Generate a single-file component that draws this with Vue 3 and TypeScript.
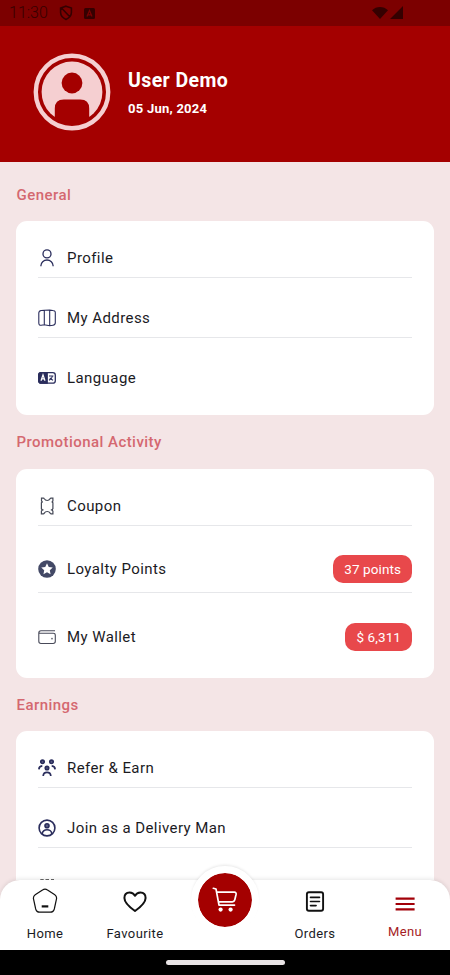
<script setup lang="ts">
type Icon = 'profile' | 'map' | 'language' | 'coupon' | 'star' | 'wallet' | 'refer' | 'delivery' | 'store'
interface Row { icon: Icon; label: string; badge?: string; tall?: boolean }
interface Section { title: string; rows: Row[] }

const sections: Section[] = [
  {
    title: 'General',
    rows: [
      { icon: 'profile', label: 'Profile' },
      { icon: 'map', label: 'My Address' },
      { icon: 'language', label: 'Language' },
    ],
  },
  {
    title: 'Promotional Activity',
    rows: [
      { icon: 'coupon', label: 'Coupon' },
      { icon: 'star', label: 'Loyalty Points', badge: '37 points', tall: true },
      { icon: 'wallet', label: 'My Wallet', badge: '$ 6,311', tall: true },
    ],
  },
  {
    title: 'Earnings',
    rows: [
      { icon: 'refer', label: 'Refer & Earn' },
      { icon: 'delivery', label: 'Join as a Delivery Man' },
      { icon: 'store', label: '' },
    ],
  },
]
</script>

<template>
  <div class="screen">
    <div class="status">
      <span class="clock">11:30</span>
      <svg class="st-shield" width="14" height="16" viewBox="0 0 14 16" fill="none" stroke="currentColor" stroke-width="1.6">
        <path d="M7 1.2 12.4 3v4.6c0 3.2-2.2 5.4-5.4 6.8-3.2-1.4-5.4-3.6-5.4-6.8V3zM2.5 3l8.5 9" />
      </svg>
      <svg class="st-app" width="11" height="11" viewBox="0 0 11 11">
        <rect width="11" height="11" rx="1.5" fill="currentColor" />
        <path d="M3 8.6 5.5 2.6 8 8.6M4 6.8h3" fill="none" stroke="#7c0000" stroke-width="1.2" />
      </svg>
      <svg class="st-net" width="32" height="14" viewBox="0 0 32 14" fill="currentColor">
        <path d="M0 4.3C4-.2 12-.2 16 4.3L8 13zM18 13 31 0v13z" />
      </svg>
    </div>

    <header class="header">
      <svg class="avatar" width="78" height="78" viewBox="0 0 78 78">
        <circle cx="39" cy="39" r="36.2" fill="none" stroke="#f5cfd1" stroke-width="4.4" />
        <circle cx="39" cy="39" r="30.4" fill="#f5cfd1" />
        <circle cx="39" cy="30" r="10.4" fill="#a40000" />
        <path d="M21.800 63V55.500q0-9 9-9h16.400q9 0 9 9V63l1 3q-8 5.500-18.200 5.500T20.800 66z" fill="#a40000" />
      </svg>
      <div class="user">
        <div class="name">User Demo</div>
        <div class="date">05 Jun, 2024</div>
      </div>
    </header>

    <main class="content">
      <section v-for="s in sections" :key="s.title" class="section">
        <h2 class="title">{{ s.title }}</h2>
        <div class="card">
          <div v-for="r in s.rows" :key="r.icon" class="row" :class="{ tall: r.tall }">
            <svg class="icon" width="18" height="18" viewBox="0 0 18 18" fill="none" stroke="currentColor" stroke-width="1.3">
              <template v-if="r.icon === 'profile'">
                <circle cx="9" cy="4.900" r="4" />
                <path d="M2.900 17.300v-.6a6.100 5.700 0 0 1 12.200 0v.6" />
              </template>
              <g v-else-if="r.icon === 'map'" stroke-width="1.100">
                <path d="M6.300 1.200 3.200 1.500Q.8 1.900.8 4v10q0 2.400 2.400 2.300l3.100-.5 5.400 1 3.300-.5q2.300-.4 2.300-2.500V3.700q0-2.200-2.400-2.200l-3.200-.4zM6.300 1.200v14.600M11.700 1.100v15.700" />
              </g>
              <template v-else-if="r.icon === 'language'">
                <rect x=".7" y="3.600" width="16.600" height="10.600" rx="2.500" />
                <path d="M3 3.600h6.200v10.600H3a2.300 2.300 0 0 1-2.300-2.300V5.900A2.300 2.300 0 0 1 3 3.600z" fill="currentColor" />
                <path d="m3 11.800 2-6 2 6M3.700 9.900h2.700" stroke="#fff" stroke-width="1.200" />
                <path d="M11 7h4.400M14.500 7q-.4 2.600-3.500 4.300M11.800 8.900q1.200 1.700 3.300 2.400" stroke-width="1.100" />
              </template>
              <g v-else-if="r.icon === 'coupon'" stroke="#454957" stroke-width="1.200">
                <path d="M3.500 1.200h2q.5 0 .8.600 1 1.700 2.900 1.700T12 1.800q.4-.6 1-.6h1.900V4l-.8.900.8.900v5.900q-1.200 1.200 0 2.400v2.700h-2q-.5 0-.8-.7-.9-1.600-2.900-1.600t-2.900 1.600q-.4.700-.9.700h-2v-2.700q1.400-1.200 0-2.400V5.800l.9-.9-.8-.9z" />
                <path d="M3.500 12.900h2M12.800 12.900h2" stroke-width="1.400" />
              </g>
              <template v-else-if="r.icon === 'star'">
                <circle cx="9" cy="9" r="8.800" fill="#434966" stroke="none" />
                <path d="m9 3.200 1.750 3.700 4 .5-2.950 2.800.75 4L9 12.250 5.450 14.200l.75-4-2.950-2.800 4-.5z" fill="#fff" stroke="none" />
              </template>
              <g v-else-if="r.icon === 'wallet'" stroke="#484a59" stroke-width="1.100">
                <path d="M17 2.800H3Q.8 2.800.8 5v8.300q0 2.200 2.200 2.200h12.100q2.200 0 2.200-2.200V7.200q0-1.900-2.100-1.900H3Q.8 5.300.8 4" />
                <circle cx="14" cy="10.600" r=".3" />
              </g>
              <g v-else-if="r.icon === 'refer'" stroke-width="1.700">
                <circle cx="4.500" cy="2.800" r="1.700" fill="#5c6084" />
                <circle cx="13.500" cy="2.800" r="1.700" fill="#5c6084" />
                <circle cx="9" cy="9" r="1.700" fill="#5c6084" />
                <path d="M.9 10.400q.1-3.100 3.400-3.500M17.100 10.400q-.1-3.100-3.400-3.500M5.200 17q.2-3.600 3.800-3.600t3.800 3.600" />
              </g>
              <g v-else-if="r.icon === 'delivery'" stroke-width="1.600">
                <circle cx="9" cy="9" r="7.900" />
                <circle cx="9" cy="6.700" r="2" fill="#5c6084" />
                <path d="M4.300 15v-.6a4.700 3.700 0 0 1 9.400 0v.6" />
              </g>
              <path v-else d="M2.300 1h3.400M7.500 1H11M13 1h3" stroke="#333" stroke-width="1.500" />
            </svg>
            <span class="label">{{ r.label }}</span>
            <span v-if="r.badge" class="badge">{{ r.badge }}</span>
          </div>
        </div>
      </section>
    </main>

    <nav class="nav">
      <div class="tab">
        <svg width="26" height="26" viewBox="0 0 26 26" fill="none" stroke="#111" stroke-width="1.200">
          <path d="M10.500 2q2.500-1.800 5 0l7.300 4.800q2.200 1.500 1.700 4.200l-2.200 10q-.8 3.200-4 3.200H7.700q-3.200 0-4-3.200L1.500 11Q1 8.300 3.200 6.800z" />
          <path d="M9.700 18.400h6.600" stroke-width="2.200" />
        </svg>
        <span>Home</span>
      </div>
      <div class="tab">
        <svg width="26" height="26" viewBox="0 0 26 26" fill="none" stroke="#111" stroke-width="2" stroke-linejoin="round">
          <path d="M13 23Q2.400 15.500 2.400 10q0-5.500 5.200-5.500 3.600 0 5.400 3.300 1.800-3.300 5.400-3.300 5.200 0 5.200 5.500T13 23z" />
        </svg>
        <span>Favourite</span>
      </div>
      <div class="tab"></div>
      <div class="tab">
        <svg width="26" height="26" viewBox="0 0 26 26" fill="none" stroke="#111" stroke-width="1.900">
          <rect x="4.900" y="4.300" width="16.200" height="18.500" rx="2" />
          <path d="M8.500 9.400h9M8.500 13.500h9M8.500 17.600h5.600" stroke-width="1.600" stroke-linecap="round" />
        </svg>
        <span>Orders</span>
      </div>
      <div class="tab active">
        <svg width="26" height="26" viewBox="0 0 26 26" stroke="#a20008" stroke-width="2.200">
          <path d="M3.600 10.700h19M3.600 16h19M3.600 21.300h19" />
        </svg>
        <span>Menu</span>
      </div>
      <div class="cart">
        <svg width="26" height="28" viewBox="0 0 26 28" fill="none" stroke="#fff" stroke-width="1.700" stroke-linejoin="round" stroke-linecap="round">
          <path d="M1.300 2.300 4 3l3 16.100h15.500M4.700 6.200h17.600q2.100 0 1.800 2l-1.300 5.600q-.5 2-2.500 2H6.700" />
          <circle cx="8.600" cy="23.600" r="2.100" fill="#fff" stroke="none" />
          <circle cx="18.600" cy="23.600" r="2.100" fill="#fff" stroke="none" />
        </svg>
      </div>
    </nav>
    <div class="system"><div class="handle"></div></div>
  </div>
</template>

<style>
body { margin: 0; background: #000; }
</style>

<style scoped>
.screen {
  width: 450px;
  height: 975px;
  display: flex;
  flex-direction: column;
  overflow: hidden;
  background: #f4e5e6;
  font-family: Roboto, "Liberation Sans", sans-serif;
  color: #1b1b1f;
}
.status {
  height: 26px;
  flex: none;
  display: flex;
  align-items: center;
  background: #7c0000;
  color: #350000;
}
.clock { width: 37px; margin-left: 9px; font-size: 16px; line-height: 26px; font-weight: 300; white-space: nowrap; }
.st-shield { margin-left: 13px; }
.st-app { margin-left: 11px; }
.st-net { margin-left: auto; margin-right: 46px; }
.header {
  height: 136px;
  flex: none;
  display: flex;
  align-items: center;
  background: #a40000;
  color: #fff;
  padding: 0 33px 5px;
  box-sizing: border-box;
}
.user { margin-left: 17px; padding-top: 2px; }
.name { font-size: 19.500px; line-height: 24px; font-weight: 700; letter-spacing: .4px; }
.date { margin-top: 8px; font-size: 13px; line-height: 16px; font-weight: 700; letter-spacing: .25px; }
.content { flex: 1; min-height: 0; overflow: hidden; padding: 5.500px 16px 0; }
.title {
  margin: 0;
  height: 53.500px;
  line-height: 54.500px;
  padding-left: .5px;
  font-size: 15px;
  font-weight: 500;
  letter-spacing: .45px;
  color: #d46870;
}
.card {
  display: flex;
  flex-direction: column;
  gap: 21px;
  padding: 18px 22px;
  border-radius: 11px;
  background: #fff;
}
.row {
  height: 38px;
  display: flex;
  align-items: center;
  border-bottom: 1px solid #e6e7ea;
}
.row:last-child { border-bottom: 0; }
.row.tall { height: 45.500px; }
.icon { flex: none; color: #2a2d5c; }
.label { margin-left: 11px; font-size: 15px; line-height: 20px; letter-spacing: .42px; }
.badge {
  margin-left: auto;
  height: 28px;
  padding: 0 11px;
  border-radius: 10px;
  background: #e8484b;
  color: #fff;
  font-size: 13.500px;
  line-height: 28px;
  letter-spacing: .08px;
}
.nav {
  position: relative;
  height: 70px;
  flex: none;
  display: grid;
  grid-template-columns: repeat(5, 1fr);
  background: #fff;
  border-radius: 20px 20px 0 0;
  box-shadow: 0 -1px 4px rgba(0, 0, 0, .1);
}
.tab { display: flex; flex-direction: column; align-items: center; padding-top: 8px; font-size: 13px; line-height: 16px; letter-spacing: .4px; }
.tab span { margin-top: 12px; }
.active { color: #a51d25; }
.active span { margin-top: 10px; }
.cart {
  position: absolute;
  left: 50%;
  top: -14px;
  width: 54px;
  height: 54px;
  margin-left: -34px;
  border: 7px solid #fff;
  border-radius: 50%;
  background: #a40000;
  background-clip: padding-box;
  display: flex;
  align-items: center;
  justify-content: center;
  box-shadow: 0 -2px 3px -1px rgba(0, 0, 0, .1);
}
.system { height: 25px; flex: none; display: flex; align-items: center; justify-content: center; background: #000; }
.handle { width: 119px; height: 5px; border-radius: 3px; background: #e9e4e6; }
</style>
